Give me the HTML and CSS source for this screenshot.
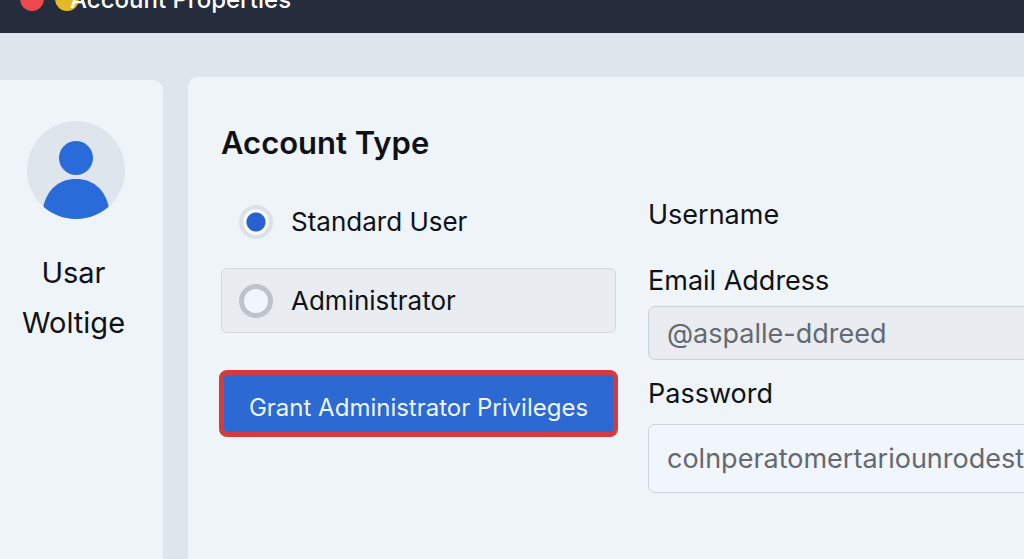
FILE: index.html
```html
<!DOCTYPE html>
<html lang="en">
<head>
  <meta charset="UTF-8">
  <meta name="viewport" content="width=device-width, initial-scale=1.0">
  <title>Account Properties</title>
  <link rel="stylesheet" href="styles.css">
</head>
<body>
  <header class="titlebar">
    <span class="dot red"></span>
    <span class="dot yellow"></span>
    <span class="title">Account Properties</span>
  </header>
  <div class="content">
    <aside class="sidebar">
      <svg class="avatar" viewBox="0 0 98 98" aria-hidden="true">
        <clipPath id="disc"><circle cx="49" cy="49" r="49"/></clipPath>
        <circle cx="49" cy="49" r="49" fill="#dfe5ec"/>
        <circle cx="49" cy="37" r="17" fill="#296bd8"/>
        <path d="M16 87 C20 68 32 58 49 58 S78 68 82 87 V98 H16 Z" fill="#296bd8" clip-path="url(#disc)"/>
      </svg>
      <p class="name">Usar<br>Woltige</p>
    </aside>
    <main class="panel">
      <h1>Account Type</h1>
      <form class="columns">
        <div class="types">
          <label class="option"><input type="radio" name="type" checked> Standard User</label>
          <label class="option boxed"><input type="radio" name="type"> Administrator</label>
          <button type="button" class="grant">Grant Administrator Privileges</button>
        </div>
        <div class="fields">
          <p class="label">Username</p>
          <label class="label" for="email">Email Address</label>
          <input class="field filled" id="email" type="text" value="@aspalle-ddreed">
          <label class="label" for="password">Password</label>
          <input class="field tall" id="password" type="text" value="colnperatomertariounrodest">
        </div>
      </form>
    </main>
  </div>
</body>
</html>
```
FILE: styles.css
```css
* {
  box-sizing: border-box;
}
body {
  margin: 0;
  min-height: 100vh;
  display: flex;
  flex-direction: column;
  overflow: hidden;
  font-family: Inter, "Liberation Sans", sans-serif;
  font-size: 26px;
  line-height: 32px;
  color: #0e1216;
  background-color: #dfe5ec;
}
h1, p {
  margin: 0;
}
.titlebar {
  display: flex;
  align-items: flex-end;
  height: 33px;
  padding: 0 20px 17px;
  overflow: hidden;
  color: #fff;
  background-color: #252d3c;
}
.dot {
  width: 24px;
  height: 24px;
  margin: 0 11px 5px 0;
  border-radius: 50%;
}
.red {
  background-color: #ec4850;
}
.yellow {
  background-color: #e6b924;
}
.title {
  margin-left: -20px;
  font-size: 24px;
  font-weight: 500;
}
.content {
  flex: 1;
  display: flex;
  align-items: stretch;
  gap: 25px;
  padding-top: 44px;
}
.sidebar {
  width: 163px;
  margin-top: 3px;
  padding: 41px 12px 0 0;
  border-radius: 0 10px 0 0;
  text-align: center;
  background-color: #eff4f9;
}
.avatar {
  display: block;
  width: 98px;
  height: 98px;
  margin: 0 auto 29px;
}
.name {
  margin-right: 4px;
  font-size: 29px;
  line-height: 50px;
}
.panel {
  flex: 1;
  min-width: 0;
  padding: 48px 0 0 33px;
  border-radius: 10px 0 0 0;
  background-color: #eff4f9;
}
h1 {
  font-size: 31px;
  line-height: 36px;
  font-weight: 600;
}
.columns {
  display: grid;
  grid-template-columns: 395px 1fr;
  gap: 32px;
  margin-top: 28px;
}
.option {
  display: flex;
  align-items: center;
  gap: 18px;
  height: 65px;
  padding: 0 17px;
  border: 1px solid transparent;
  border-radius: 6px;
}
.boxed {
  margin-top: 14px;
  border-color: #d3d8de;
  background-color: #e9edf2;
}
.option input {
  appearance: none;
  width: 34px;
  height: 34px;
  margin: 0;
  border: 5px solid #bcc3ca;
  border-radius: 50%;
  background-color: #f2f6fc;
}
.option input:checked {
  border-width: 4px;
  border-color: #dce1e6;
  background: radial-gradient(circle, #2861cf 9px, #f5f8fc 10px);
}
/* the red frame sticks out a little past the option box above */
.grant {
  display: block;
  width: calc(100% + 4px);
  height: 67px;
  margin: 37px -2px 0;
  padding: 8px 0 0;
  border: 5px solid #d33b40;
  border-radius: 8px;
  font: inherit;
  font-size: 24px;
  color: #f0f5fe;
  background-color: #2d69d2;
}
.fields {
  min-width: 0;
  margin-right: -20px;
  font-size: 27px;
}
.label {
  display: block;
}
p.label {
  margin: 10px 0 34px;
}
.field {
  display: block;
  width: 100%;
  height: 54px;
  margin: 9px 0 18px;
  padding: 0 18px;
  border: 1px solid #cdd3da;
  border-radius: 7px;
  font: inherit;
  color: #64696f;
  background-color: #f1f5fc;
}
.filled {
  background-color: #e9edf2;
}
.tall {
  height: 69px;
  margin-top: 14px;
}
```
